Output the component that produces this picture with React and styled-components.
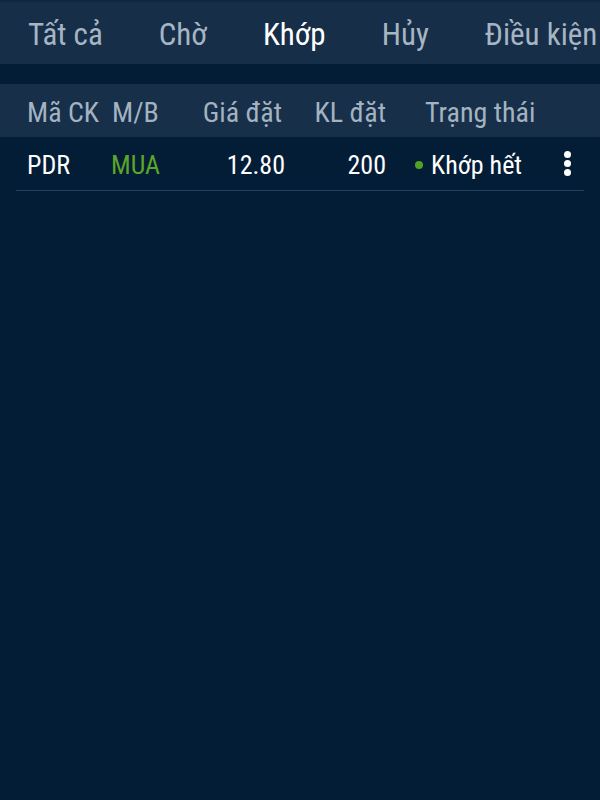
import React from "react";
import styled, { createGlobalStyle } from "styled-components";

const Global = createGlobalStyle`
  html, body { margin: 0; padding: 0; background: #041d36; }
  body { font-family: "Roboto Condensed", Roboto, "Liberation Sans", sans-serif; font-stretch: condensed; }
  #root { min-height: 800px; background: #041d36; }
`;

const Page = styled.div`
  width: 600px;
  height: 800px;
  background: #041d36;
  overflow: hidden;
  display: flex;
  flex-direction: column;
`;

const TabBar = styled.div`
  height: 62px;
  border-top: 2px solid #10283f;
  background: #162e47;
  display: flex;
  align-items: center;
  overflow: hidden;
  white-space: nowrap;
`;

const Tab = styled.div`
  flex: 0 0 auto;
  padding: 0 28px;
  font-size: 31px;
  line-height: 1;
  padding-top: 2px;
  color: ${(p) => (p.$active ? "#ffffff" : "#a6b5c3")};
  font-weight: 400;
`;

const Spacer = styled.div`
  height: 20px;
`;

const HeaderRow = styled.div`
  height: 53px;
  background: #172f48;
  padding: 0 16px;
  display: grid;
  grid-template-columns: 84px 80px 105px 101px 1fr 40px;
  align-items: center;
`;

const DataRow = styled.div`
  height: 53px;
  margin: 0 16px;
  border-bottom: 1px solid #27415c;
  display: grid;
  grid-template-columns: 84px 80px 105px 101px 1fr 40px;
  align-items: center;
`;

const HCell = styled.div`
  font-size: 28px;
  color: #a3b3c2;
  padding-left: ${(p) => p.$pl || 0}px;
  padding-right: ${(p) => p.$pr || 0}px;
  text-align: ${(p) => p.$align || "left"};
  padding-top: 4px;
  white-space: nowrap;
`;

const Cell = styled.div`
  font-size: 26px;
  color: ${(p) => p.$color || "#ffffff"};
  padding-left: ${(p) => p.$pl || 0}px;
  padding-top: 2px;
  white-space: nowrap;
  display: flex;
  align-items: center;
  justify-content: ${(p) => (p.$align === "right" ? "flex-end" : "flex-start")};
`;

const Dot = styled.span`
  width: 8px;
  height: 8px;
  border-radius: 50%;
  background: #4ea421;
  margin-right: 8px;
  flex: 0 0 auto;
`;

const Kebab = styled.div`
  display: flex;
  flex-direction: column;
  align-items: center;
  gap: 2px;
  padding-left: 6px;
`;

const KDot = styled.span`
  width: 7px;
  height: 7px;
  border-radius: 50%;
  background: #ffffff;
`;

const tabs = ["Tất cả", "Chờ", "Khớp", "Hủy", "Điều kiện"];

export default function App() {
  return (
    <Page>
      <Global />
      <TabBar>
        {tabs.map((t) => (
          <Tab key={t} $active={t === "Khớp"}>
            {t}
          </Tab>
        ))}
      </TabBar>
      <Spacer />
      <HeaderRow>
        <HCell $pl={11}>Mã CK</HCell>
        <HCell $pl={12}>M/B</HCell>
        <HCell $align="right" $pr={3}>Giá đặt</HCell>
        <HCell $align="right">KL đặt</HCell>
        <HCell $pl={39}>Trạng thái</HCell>
        <span />
      </HeaderRow>
      <DataRow>
        <Cell $pl={11}>PDR</Cell>
        <Cell $pl={11} $color="#5ba52a">MUA</Cell>
        <Cell $align="right">12.80</Cell>
        <Cell $align="right">200</Cell>
        <Cell $pl={29}>
          <Dot />
          Khớp hết
        </Cell>
        <Kebab>
          <KDot />
          <KDot />
          <KDot />
        </Kebab>
      </DataRow>
    </Page>
  );
}
